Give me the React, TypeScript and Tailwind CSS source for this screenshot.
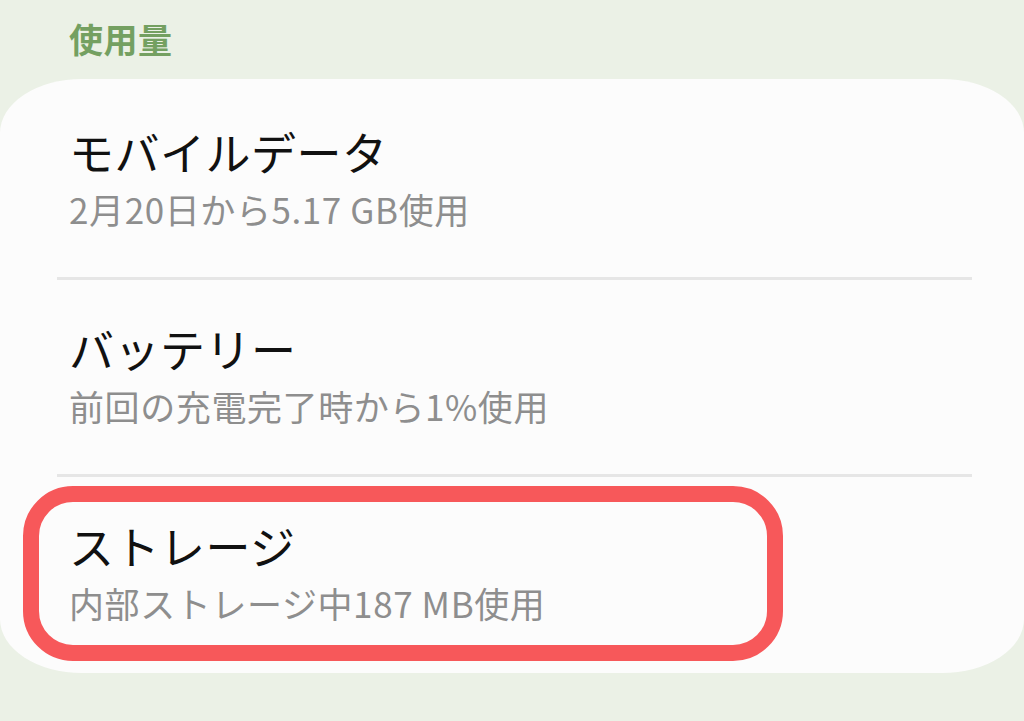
const rows = [
  { title: "モバイルデータ", sub: "2月20日から5.17 GB使用" },
  { title: "バッテリー", sub: "前回の充電完了時から1%使用" },
  { title: "ストレージ", sub: "内部ストレージ中187 MB使用", marked: true },
];

export default function App() {
  return (
    <div className="w-[1024px] h-[721px] overflow-hidden bg-[#ebf1e6] font-[family-name:'Noto_Sans_CJK_JP','Noto_Sans',sans-serif]">
      <div className="pt-[15px] pl-[69px] h-[79px]">
        <p className="text-[34px] leading-[48px] font-bold text-[#74a061] tracking-[0.5px]">使用量</p>
      </div>
      <div className="bg-[#fcfcfc] rounded-[82px/54px] w-[1024px]">
        {rows.map((row, i) => (
          <div key={i}>
            {i > 0 && <div className="ml-[57px] mr-[52px] h-[3px] bg-[#e6e6e6]" />}
            <div
              className={`relative pl-[69px] ${i === 0 ? "pt-[45px]" : "pt-[41px]"} ${
                i === rows.length - 1 ? "pb-[42px]" : "pb-[40px]"
              }`}
            >
              <p className="text-[45px] leading-[56px] text-[#111111] tracking-[0.5px]">{row.title}</p>
              <p className="text-[35px] leading-[57px] text-[#8e8e8e] tracking-[0.6px]">{row.sub}</p>
              {row.marked && (
                <div className="absolute left-[23px] top-[9px] w-[760px] h-[175px] border-[16px] border-[#f7585a] rounded-[50px]" />
              )}
            </div>
          </div>
        ))}
      </div>
    </div>
  );
}
